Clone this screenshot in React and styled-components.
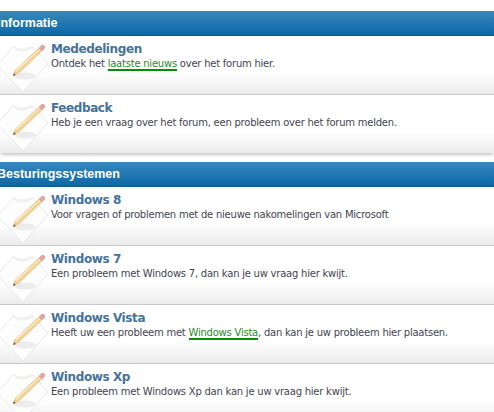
import React from 'react';
import styled, { createGlobalStyle } from 'styled-components';

const GlobalStyle = createGlobalStyle`
  html, body {
    margin: 0;
    padding: 0;
    background: #fff;
    overflow: hidden;
  }
`;

const Page = styled.div`
  height: 412px;
  overflow: hidden;
  padding-top: 11px;
  font-family: "DejaVu Sans", Verdana, sans-serif;
`;

const Section = styled.section`
  margin-bottom: 9px;
  box-shadow: 0 3px 3px -1px rgba(0, 0, 0, 0.22);
`;

const Header = styled.h2`
  margin: 0;
  height: 24px;
  line-height: 25px;
  text-indent: -3px;
  font-family: "Liberation Sans", Arial, sans-serif;
  font-size: 12.5px;
  font-weight: bold;
  color: #fff;
  background: linear-gradient(#3a88bb, #0a68a8);
  border-bottom: 1px solid #0d5a8e;
  white-space: nowrap;
  overflow: hidden;
`;

const Row = styled.div`
  display: flex;
  height: 58px;
  background: linear-gradient(#fff 0, #fff 62%, #ececec 100%);
  border-bottom: 1px solid #c8c8c8;

  &:last-child {
    border-bottom: none;
  }
`;

const IconBox = styled.div`
  flex: 0 0 51px;
  padding-top: 7px;
  line-height: 0;
`;

const Body = styled.div`
  padding-top: 6px;
`;

const Title = styled.div`
  font-size: 12px;
  letter-spacing: -0.4px;
  line-height: 15px;
  font-weight: bold;
  color: #44729b;
`;

const Desc = styled.div`
  font-size: 10px;
  letter-spacing: -0.23px;
  line-height: 13px;
  color: #444450;
  white-space: nowrap;
`;

const GreenLink = styled.a`
  color: #2a8a2a;
  border-bottom: 2px solid #009000;
`;

const Paper = styled.svg`
  overflow: visible;
`;

const NoteIcon = () => (
  <Paper width="49" height="50" viewBox="0 0 49 50">
    <path d="M-3 22 L13 4 Q21 12 33 4 L48 21 L23 49 Z" fill="#fdfdfd" stroke="#e8e8e8" />
    <path d="M13 4 Q21 12 33 4 L31 3 Q21 8 14 3 Z" fill="#f1f1f1" />
    <ellipse cx="25" cy="33" rx="11" ry="3.5" fill="#e6e6e6" opacity="0.75" />
    <path d="M13 33 L15 27 L39 5 L42 8 L19 30 Z" fill="#f1d295" stroke="#e0b274" strokeWidth="0.4" />
    <path d="M15 27 L40 6 L40.6 6.6 L16.5 28 Z" fill="#fbeccb" />
    <path d="M13 33 L14 30 L16 32 Z" fill="#7a6547" />
    <path d="M39 5 L42 2 Q45 2 45 5 L42 8 Z" fill="#e6a3a3" stroke="#cf9090" strokeWidth="0.4" />
  </Paper>
);

const sections = [
  {
    name: 'Informatie',
    rows: [
      {
        title: 'Mededelingen',
        desc: (
          <>
            Ontdek het <GreenLink>laatste nieuws</GreenLink> over het forum hier.
          </>
        ),
      },
      { title: 'Feedback', desc: 'Heb je een vraag over het forum, een probleem over het forum melden.' },
    ],
  },
  {
    name: 'Besturingssystemen',
    rows: [
      { title: 'Windows 8', desc: 'Voor vragen of problemen met de nieuwe nakomelingen van Microsoft' },
      { title: 'Windows 7', desc: 'Een probleem met Windows 7, dan kan je uw vraag hier kwijt.' },
      {
        title: 'Windows Vista',
        desc: (
          <>
            Heeft uw een probleem met <GreenLink>Windows Vista</GreenLink>, dan kan je uw probleem hier plaatsen.
          </>
        ),
      },
      { title: 'Windows Xp', desc: 'Een probleem met Windows Xp dan kan je uw vraag hier kwijt.' },
    ],
  },
];

const App = () => {
  return (
    <Page>
      <GlobalStyle />
      {sections.map((section) => (
        <Section key={section.name}>
          <Header>{section.name}</Header>
          {section.rows.map((row) => (
            <Row key={row.title}>
              <IconBox>
                <NoteIcon />
              </IconBox>
              <Body>
                <Title>{row.title}</Title>
                <Desc>{row.desc}</Desc>
              </Body>
            </Row>
          ))}
        </Section>
      ))}
    </Page>
  );
};

export default App;
